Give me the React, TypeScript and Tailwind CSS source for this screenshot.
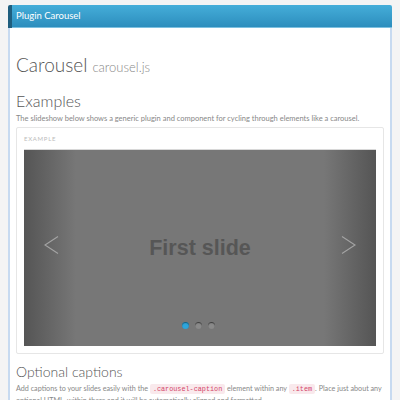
const sans = "font-['Lato','Noto_Sans',sans-serif]";

function Code({ children }: { children: string }) {
  return (
    <code className="rounded-[2px] bg-[#f9e9ec] px-[3px] py-[1px] font-['Liberation_Mono',monospace] text-[6.8px] text-[#d4456a]">
      {children}
    </code>
  );
}

function Chevron({ dir }: { dir: 'left' | 'right' }) {
  const points = dir === 'left' ? '14,0.5 1,9 14,17.5' : '1,0.5 14,9 1,17.5';
  return (
    <svg width="15" height="18" viewBox="0 0 15 18" className="absolute top-[86px]" style={dir === 'left' ? { left: 20 } : { right: 20 }}>
      <polyline points={points} fill="none" stroke="#a4a4a4" strokeWidth="1.1" />
    </svg>
  );
}

function Carousel() {
  return (
    <div className="relative h-[197px] border-t border-[#d8d8d8] bg-[#777777]">
      <div className="flex h-full">
        <div className="w-[52px] bg-gradient-to-r from-[#555555] to-[#777777]" />
        <div className="flex flex-1 items-center justify-center pt-[2px]">
          <span className="font-['Liberation_Sans',sans-serif] text-[21.5px] font-bold text-[#565656]">First slide</span>
        </div>
        <div className="w-[52px] bg-gradient-to-l from-[#555555] to-[#777777]" />
      </div>
      <Chevron dir="left" />
      <Chevron dir="right" />
      <div className="absolute bottom-[17px] left-0 flex w-full justify-center gap-[6px] pr-[4px]">
        <span className="size-[7px] rounded-full bg-[#2ea5db] shadow-[inset_0_1px_1px_#185a78]" />
        <span className="size-[7px] rounded-full bg-[#8a8a8a] shadow-[inset_0_1px_1px_#3a3a3a]" />
        <span className="size-[7px] rounded-full bg-[#8a8a8a] shadow-[inset_0_1px_1px_#3a3a3a]" />
      </div>
    </div>
  );
}

export default function App() {
  return (
    <div className={`h-[400px] overflow-hidden bg-[#f4f4f4] px-[8px] pt-[5px] ${sans}`}>
      <div className="flex h-[23px] items-center overflow-hidden rounded-t-[2px] border-l-[4px] border-[#1f5e7e] bg-gradient-to-b from-[#45aed9] to-[#2b8cbc] pl-[4px] shadow-[inset_0_-1px_0_#7cc0e0]">
        <span className="text-[9.5px] text-white">Plugin Carousel</span>
      </div>
      <div className="h-[400px] border-x-2 border-[#c7daf0] bg-white px-[6px] pt-[25px] text-[#555]">
        <h1 className="flex items-baseline gap-[5px] font-light">
          <span className="text-[19px] leading-[24px]">Carousel</span>
          <span className="text-[13px] text-[#888]">carousel.js</span>
        </h1>
        <h2 className="mt-[13px] text-[16px] leading-[20px] font-light">Examples</h2>
        <p className="mt-[2px] text-[7.5px] leading-[11px] text-[#888]">
          The slideshow below shows a generic plugin and component for cycling through elements like a carousel.
        </p>
        <div className="mt-[3px] rounded-[2px] border border-[#e6e6e6] px-[7px] pt-[7px] pb-[7px]">
          <div className="mb-[6px] text-[6px] leading-[8px] tracking-[0.12em] text-[#bbbbbb]">EXAMPLE</div>
          <Carousel />
        </div>
        <h3 className="mt-[9px] text-[14px] leading-[18px] font-light">Optional captions</h3>
        <p className="mt-[2px] text-[7.2px] leading-[11px] text-[#888]">
          Add captions to your slides easily with the <Code>.carousel-caption</Code> element within any{' '}
          <Code>.item</Code>. Place just about any optional HTML, within there and it will be automatically aligned and
          formatted.
        </p>
      </div>
    </div>
  );
}
